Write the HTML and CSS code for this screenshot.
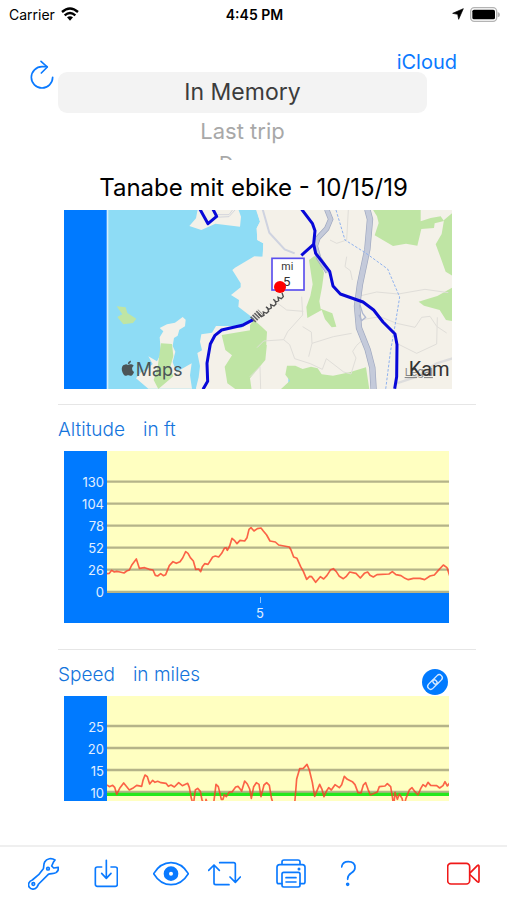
FILE: index.html
```
<!DOCTYPE html>
<html lang="en">
<head>
    <meta charset="UTF-8">
    <meta name="viewport" content="width=device-width, initial-scale=1.0">
    <title>Tanabe mit ebike - 10/15/19</title>
    <link rel="stylesheet" href="styles.css">
</head>
<body>
    <div class="status-bar">
        <div class="status-left">
            <span>Carrier</span>
            <svg width="18" height="14" viewBox="0 0 54 42" fill="none" stroke="#000" stroke-width="7" aria-hidden="true">
                <path d="M3 15Q27-6 51 15"/>
                <path d="M11 25Q27 11 43 25"/>
                <path d="M27 41l-9-10q9-7 18 0z" fill="#000" stroke="none"/>
            </svg>
        </div>
        <div class="status-time">4:45 PM</div>
        <div class="status-right">
            <svg width="12" height="12" viewBox="0 0 36 36" aria-hidden="true">
                <path d="M34 2L2 16l15 3 3 15z" fill="#000" stroke="#000" stroke-width="2" stroke-linejoin="round"/>
            </svg>
            <svg width="30" height="15" viewBox="0 0 90 45" aria-hidden="true">
                <rect x="2" y="2" width="78" height="41" rx="11" fill="#fff" stroke="#b4b4b4" stroke-width="4"/>
                <rect x="7" y="8" width="68" height="29" rx="5" fill="#000"/>
                <path d="M83 15q7 2 7 8t-7 8z" fill="#b4b4b4"/>
            </svg>
        </div>
    </div>

    <header>
        <button class="refresh" type="button" aria-label="Reload">
            <svg width="26" height="30" viewBox="87 179 78 90" fill="none" stroke="#0a7aff" stroke-width="5" stroke-linecap="round" stroke-linejoin="round">
                <path d="M158 231a32 32 0 1 1-32-32h15"/>
                <path d="M123 183l19 17-18 18"/>
            </svg>
        </button>
        <a class="icloud" href="#icloud">iCloud</a>
        <div class="picker" role="listbox" aria-label="Trip">
            <div class="option selected" role="option" aria-selected="true">In Memory</div>
            <div class="option" role="option" aria-selected="false">Last trip</div>
            <div class="option far" role="option" aria-selected="false">Days</div>
        </div>
    </header>

    <main>
        <h1>Tanabe mit ebike - 10/15/19</h1>

        <div class="map">
            <svg viewBox="0 0 1164 537" preserveAspectRatio="xMinYMid slice" role="img" aria-label="Map of the trip">
                <rect width="1164" height="537" fill="#8edcf5"/>
                <!-- west side: bay, islands and peninsula -->
                <g transform="translate(-27 -30)">
                    <path d="M428 28l-5 27-20 23 36 12 42-19 74 9 3-30-8-22z" fill="#f4f1e9"/>
                    <path d="M480 44h42l12-16M478 52l44-2 18-20" fill="none" stroke="#d3d5dc" stroke-width="3"/>
                    <path d="M185 319l27 3 5 17 27 17-10 13-29 4-18-22 15-8z" fill="#bfe5a4"/>
                    <path d="M314 384l22-11 24-5 23-17 9 8-2 20-17 10-5 18-11 7-4 24 8 17-8 31 11 30 46-26-5 36 6 40H280l-37-31 15-18 14-5 21-20-13-23 26 15 12-24-4-48 11-18z" fill="#f4f1e9"/>
                    <path d="M318 430l33 2 4 36-10 36 10 25-45 38-14-27 12-40z" fill="#bfe5a4"/>
                    <path d="M700 20H600l15 45-10 20 2 35 18 10-2 40-25-1-58 34-8 7 25 40v12l-29 23 24 15-2 20 48 37-40 28-30-7-45 0-12 20-32 5-4 22 6 26-14 8 8 39-4 34-8 32 4 20H700z" fill="#f4f1e9"/>
                    <path d="M500 405l90-15 30-40 22 40-5 30-6 60-46 55 5 35h-45l-28-20-8-50 22-34-20-16z" fill="#bfe5a4"/>
                </g>
                <!-- east side: land, woods and roads -->
                <g transform="translate(558 -30)">
                    <path d="M20 28l10 37-10 20 2 35 18 10-2 40-15 2-23 100 18 100 30 60 100 140h480V28z" fill="#f4f1e9"/>
                    <path d="M368 28h144v36l30-10 30-5 10 14-28 7-2 14-38 3-12 50-34-6-39 7-55-32 12-37-5-20z" fill="#bfe5a4"/>
                    <path d="M612 35l-30 25-7 42-18 31 15 40 15 42 25 15zM612 260l-50 28-30 9-26 8 16 12 47 13 19 30 24 4z" fill="#bfe5a4"/>
                    <path d="M177 180l16-12 15 14 14 36-6 44-8 42 4 22 35 14 12 40-14 2-20-24-10-28-43 24-3-33 12-33 7-35-7-46z" fill="#bfe5a4"/>
                    <path d="M0 375l12-15 23 20 16 15-2 35-17 48-32 30z" fill="#bfe5a4"/>
                    <path d="M92 568l28-26-14-18 5-27 25 0 22 10 25-7 20 5 12 18 34 4 50-10 49-15 10 66z" fill="#bfe5a4"/>
                    <g fill="none" stroke="#e0ded9" stroke-width="3">
                        <path d="M70 300l40 30 50 4M155 290l3 55-45 50-12 24-60 4-20 20M101 419l18 15 15 42 47 15 36 17 12-32 52 40 22 6 15-48-10-20 12-18 22-20M158 380l26 16 2 34-10 40M186 430l64-20 55-10M320 290l60-14 65 6 80-14 70 10M330 360l60-10 50 20 55 12 20-30 25-3 20 30 30 20M440 430l60 30 60-28 2-80M290 170l-5 30 16 12 6 28M240 120l20 10 30-10 5-90M0 530l30-30 2 68"/>
                        <path d="M440 550l60-20 60-40 50-16" stroke="#ddd" stroke-width="7"/>
                    </g>
                    <path d="M38 28l20 70 46 50 30 12" fill="none" stroke="#cfd3e0" stroke-width="6"/>
                    <path d="M230 28l12 30-12 28-26 28-8 24 10 36 28 42" fill="none" stroke="#9fa8c0" stroke-width="16"/>
                    <path d="M230 28l12 30-12 28-26 28-8 24 10 36 28 42" fill="none" stroke="#c4cada" stroke-width="12"/>
                    <path d="M352 28l8 30-8 90-22 104-9 66 6 66 26 65 14 54 4 68" fill="none" stroke="#9fa8c0" stroke-width="19"/>
                    <path d="M352 28l8 30-8 90-22 104-9 66 6 66 26 65 14 54 4 68" fill="none" stroke="#c4cada" stroke-width="15"/>
                    <path d="M330 315l8 25 9 12-12 10-8-18" fill="none" stroke="#aeb7d0" stroke-width="4"/>
                    <path d="M258 30l27 90 62 39 66 48 36 84-14 86-14 80-14 111" fill="none" stroke="#8fb2ef" stroke-width="3" stroke-dasharray="8 5"/>
                </g>
                <!-- recorded track -->
                <g fill="none" stroke="#0808d8" stroke-width="9" stroke-linejoin="round">
                    <path d="M408-2l24 43 26-22-11-21"/>
                    <path d="M417 538l14-24-2-54 10-58 14-26 20-16 62-14 34-18"/>
                    <path d="M713-2l32 42 8 22-4 40 6 28 42 54 10 44 22 24 68 24 32 24 28 36 36 36 6 32-1 96-6 36"/>
                    <path d="M748 104l-36 32"/>
                </g>
                <path d="M566 330l24-24" stroke="#666" stroke-width="22" stroke-dasharray="5 3"/>
                <path d="M584 312l8 8 8-4-2-10 10 4 6-6-4-12M606 290l8 8 8-4-2-10 10 4 6-6-4-12M628 268l8 8 8-4-2-10 10 4 6-6-4-12" fill="none" stroke="#4d4d4d" stroke-width="4"/>
                <rect x="624" y="145" width="96" height="95" fill="#fff" stroke="#5b50ee" stroke-width="5"/>
                <text class="pin-text" x="670" y="181">mi</text>
                <text class="pin-text pin-number" x="668" y="229">5</text>
                <circle cx="648" cy="231" r="18" fill="#f00"/>
                <!-- attribution -->
                <path transform="translate(169 452) scale(1.9)" fill="#4b5557" d="M12.152 6.896c-.948 0-2.415-1.078-3.96-1.04-2.04.027-3.91 1.183-4.961 3.014-2.117 3.675-.546 9.103 1.519 12.09 1.013 1.454 2.208 3.09 3.792 3.039 1.52-.065 2.09-.987 3.935-.987 1.831 0 2.35.987 3.96.948 1.637-.026 2.676-1.48 3.676-2.948 1.156-1.688 1.636-3.325 1.662-3.415-.039-.013-3.182-1.221-3.22-4.857-.026-3.04 2.48-4.494 2.597-4.559-1.429-2.09-3.623-2.324-4.39-2.376-2-.156-3.675 1.09-4.61 1.09zM15.53 3.83c.843-1.012 1.4-2.427 1.245-3.83-1.207.052-2.662.805-3.532 1.818-.78.896-1.454 2.338-1.273 3.714 1.338.104 2.715-.688 3.559-1.701z"/>
                <text class="maps-text" x="215" y="498">Maps</text>
                <text class="legal-text" x="1022" y="498">Legal</text>
                <text class="place-text" x="1034" y="498">Kam</text>
                <rect width="129" height="537" fill="#007aff"/>
                <rect x="128" width="5" height="537" fill="#d4effc"/>
            </svg>
        </div>

        <section>
            <h2><span>Altitude</span><span>in ft</span></h2>
            <div class="chart altitude">
                <div class="y-axis">
                    <span>130</span>
                    <span>104</span>
                    <span>78</span>
                    <span>52</span>
                    <span>26</span>
                    <span>0</span>
                </div>
                <svg class="plot" viewBox="0 0 1026 426" preserveAspectRatio="none" role="img" aria-label="Altitude in feet">
                    <path class="grid" d="M0 92h1026M0 158h1026M0 224h1026M0 290h1026M0 356h1026M0 423h1026"/>
                    <polyline class="line" transform="translate(-171 -153)" points="171,521 178,520 185,511 193,516 200,514 210,516 222,519 230,513 238,510 246,494 259,477 268,505 284,503 298,508 309,510 316,526 323,528 332,521 340,527 347,524 358,497 369,485 379,490 390,485 398,474 407,455 414,460 421,473 430,483 437,508 446,507 452,515 457,500 464,491 474,493 488,471 496,468 506,471 515,460 523,445 528,443 532,451 539,438 546,415 553,421 561,431 570,421 584,423 591,413 597,388 603,383 612,393 622,386 633,384 640,393 650,405 660,423 676,426 686,435 702,438 718,441 723,450 731,471 741,475 752,500 760,514 770,538 779,529 785,530 797,547 811,530 821,537 831,526 842,509 850,506 859,515 868,529 880,536 888,530 899,516 918,520 931,534 943,520 953,516 960,526 970,531 981,524 1017,522 1027,515 1038,524 1053,527 1065,535 1075,539 1090,535 1110,535 1124,539 1140,528 1153,525 1165,511 1180,495 1191,503 1200,530"/>
                </svg>
                <div class="x-axis"><div class="tick">5</div></div>
            </div>
        </section>

        <section>
            <h2><span>Speed</span><span>in miles</span></h2>
            <button class="link-button" type="button" aria-label="Link charts">
                <svg width="26" height="26" viewBox="0 0 78 78" fill="none" stroke="#d5e9ff" stroke-width="4">
                    <g transform="rotate(-45 39 39)">
                        <rect x="12" y="30" width="32" height="18" rx="9"/>
                        <rect x="34" y="30" width="32" height="18" rx="9"/>
                    </g>
                </svg>
            </button>
            <div class="chart speed">
                <div class="y-axis">
                    <span>25</span>
                    <span>20</span>
                    <span>15</span>
                    <span>10</span>
                </div>
                <svg class="plot" viewBox="0 0 1026 315" preserveAspectRatio="none" role="img" aria-label="Speed in miles">
                    <path class="grid" d="M0 90h1026M0 156h1026M0 222h1026M0 288h1026"/>
                    <path class="average" d="M0 295h1026"/>
                    <polyline class="line" transform="translate(-171 -168)" points="171,435 178,440 188,436 194,442 200,463 209,445 221,429 229,439 238,450 248,445 260,436 275,439 279,421 285,405 292,410 299,432 308,421 315,427 323,424 333,428 348,430 355,439 363,435 373,441 386,428 397,437 413,430 418,442 424,475 430,495 436,450 443,445 451,454 456,480 466,498 468,478 475,498 490,498 498,433 505,440 514,478 519,478 523,464 529,470 538,456 546,456 557,441 564,439 575,453 584,423 592,432 599,447 604,475 611,440 619,428 627,433 633,470 642,435 650,428 658,436 664,473 672,500 732,500 735,480 740,417 749,386 760,385 771,373 778,390 787,427 794,469 801,452 809,433 816,448 822,470 830,452 836,443 844,450 855,434 868,443 875,434 883,409 892,418 907,425 915,434 924,458 933,459 940,435 947,428 954,448 961,465 982,456 988,440 1005,438 1012,431 1022,440 1027,470 1031,500 1035,457 1042,478 1048,462 1056,475 1062,498 1068,475 1078,450 1086,443 1095,455 1104,465 1112,446 1119,434 1127,440 1134,427 1142,436 1160,437 1169,444 1179,437 1185,425 1192,438 1200,428"/>
                </svg>
            </div>
        </section>
    </main>

    <nav class="toolbar" aria-label="Tools">
        <button type="button" aria-label="Settings">
            <svg width="31" height="33" viewBox="84 50 93 99">
                <path d="M165 59c-10-7-25-5-31 6-4 7-2 16-4 20l-14 18-19 16c-11 4-14 14-9 22 6 8 18 7 23-1l5-9 29-29c8-4 15 0 23-5 6-4 8-10 7-16l-14 2-6-6 5-11z"/>
                <circle cx="144" cy="85" r="4"/>
                <circle cx="100" cy="131" r="4"/>
            </svg>
        </button>
        <button type="button" aria-label="Import">
            <svg width="24" height="33" viewBox="282 50 72 99">
                <path d="M305 80h-13q-6 0-6 6v46q0 6 6 6h54q6 0 6-6V86q0-6-6-6h-13"/>
                <path d="M319 60v54M305 99l14 15 14-15"/>
            </svg>
        </button>
        <button type="button" aria-label="View">
            <svg width="36" height="33" viewBox="459 50 108 99">
                <path d="M461 100Q481 67 513 67T565 100Q545 133 513 133T461 100z"/>
                <circle cx="513" cy="100" r="14" stroke-width="16"/>
            </svg>
        </button>
        <button class="repeat" type="button" aria-label="Repeat">
            <svg width="33" height="33" viewBox="621 50 99 99">
                <path d="M656 67h42q5 0 5 5v53M687 110l16 16 15-16M684 133h-40q-5 0-5-5V75M623 90l16-16 16 16"/>
            </svg>
        </button>
        <button type="button" aria-label="Print">
            <svg width="30" height="33" viewBox="76 50 90 99">
                <path d="M94 73v-8q0-6 6-6h42q6 0 6 6v8M94 130h-9q-6 0-6-6V81q0-8 8-8h68q8 0 8 8v43q0 6-6 6h-9"/>
                <rect x="94" y="96" width="54" height="44" rx="5"/>
                <path d="M106 112h30M106 125h30"/>
                <circle cx="145" cy="86" r="2"/>
            </svg>
        </button>
        <button type="button" aria-label="Help">
            <svg width="15" height="33" viewBox="271 50 45 99">
                <path d="M273 80q2-16 20-16 20 0 20 18 0 9-11 16t-11 17v2"/>
                <circle cx="291" cy="132" r="3"/>
            </svg>
        </button>
        <button class="record" type="button" aria-label="Record">
            <svg width="33" height="33" viewBox="594 50 99 99">
                <rect x="596" y="69" width="66" height="62" rx="10"/>
                <path d="M664 97l21-21q5-4 5 2v44q0 6-5 2l-21-20"/>
            </svg>
        </button>
    </nav>
</body>
</html>
```
FILE: styles.css
```
* {
    box-sizing: border-box;
}

body {
    margin: 0;
    min-height: 100vh;
    display: flex;
    flex-direction: column;
    background-color: #fff;
    color: #000;
    font-family: Inter, "Liberation Sans", sans-serif;
}

button {
    padding: 0;
    border: 0;
    background: none;
    cursor: pointer;
}

svg {
    display: block;
}

/* Status bar */
.status-bar {
    display: grid;
    grid-template-columns: 1fr auto 1fr;
    align-items: center;
    height: 28px;
    padding: 0 7px 0 9px;
    font-size: 14px;
}

.status-left,
.status-right {
    display: flex;
    align-items: center;
    gap: 6px;
}

.status-right {
    justify-content: flex-end;
}

.status-time {
    font-weight: 600;
}

/* Trip picker */
header {
    display: grid;
    grid-template-columns: 58px 1fr 80px;
    grid-template-rows: 44px 88px;
}

.refresh {
    grid-column: 1;
    grid-row: 1 / 3;
    align-self: start;
    margin-top: 32px;
    padding-left: 29px;
}

.icloud {
    grid-column: 2 / 4;
    grid-row: 1;
    justify-self: end;
    padding: 20px 50px 0 0;
    line-height: 28px;
    font-size: 20px;
    color: #0a7aff;
    text-decoration: none;
}

.picker {
    grid-column: 2;
    grid-row: 2;
    overflow: hidden;
    text-align: center;
}

.option {
    font-size: 22px;
    line-height: 36px;
    color: #a8a8a8;
}

.option.selected {
    border-radius: 9px;
    background-color: #f3f3f3;
    font-size: 23px;
    line-height: 41px;
    color: #3c3c3c;
}

.option.far {
    font-size: 20px;
    line-height: 30px;
}

/* Trip content */
main {
    flex: 1;
    padding: 0 31px 44px 58px;
}

h1 {
    margin: 0;
    padding: 6px 33px 0 6px;
    font-size: 24px;
    font-weight: 400;
    line-height: 44px;
    text-align: center;
    white-space: nowrap;
}

.map {
    margin: 0 24px 15px 6px;
}

.map svg {
    width: 100%;
    height: 179px;
}

.pin-text {
    font-family: Roboto, sans-serif;
    font-size: 32px;
    text-anchor: middle;
    fill: #333;
}

.pin-number {
    font-size: 40px;
}

.maps-text {
    font-size: 54px;
    fill: #4b5557;
}

.legal-text {
    font-size: 33px;
    text-decoration: underline;
    fill: #888;
}

.place-text {
    font-family: Roboto, sans-serif;
    font-size: 60px;
    fill: #333;
}

section {
    position: relative;
    border-top: 1px solid #e6e6e6;
}

h2 {
    display: flex;
    gap: 18px;
    margin: 0;
    padding-top: 4px;
    font-size: 19px;
    font-weight: 300;
    line-height: 42px;
    color: #1474dc;
}

.link-button {
    position: absolute;
    top: 19px;
    right: 28px;
    border-radius: 50%;
    background-color: #007aff;
}

/* Charts */
.chart {
    display: grid;
    grid-template-columns: 43px 1fr;
    margin: 0 27px 0 6px;
    background-color: #ffffc1;
}

.altitude {
    grid-template-rows: 142px 30px;
    margin-bottom: 26px;
}

.speed {
    grid-template-rows: 105px;
}

.y-axis {
    grid-row: 1 / -1;
    display: flex;
    flex-direction: column;
    padding: 20px 3px 0 0;
    background-color: #007aff;
    font-size: 13px;
    line-height: 22px;
    text-align: right;
    color: #e0efff;
}

.plot {
    width: 100%;
    height: 100%;
}

.grid {
    fill: none;
    stroke: #b5b489;
    stroke-width: 7;
}

.average {
    stroke: #24e81c;
    stroke-width: 10;
}

.line {
    fill: none;
    stroke: #fa3c28;
    stroke-opacity: 0.8;
    stroke-width: 5;
    stroke-linejoin: round;
}

.x-axis {
    background-color: #007aff;
}

.tick {
    width: 12px;
    margin-left: 43%;
    font-size: 13px;
    line-height: 16px;
    text-align: center;
    color: #e0efff;
}

.tick::before {
    content: "";
    display: block;
    width: 1px;
    height: 6px;
    margin: 4px auto 2px;
    background-color: #8cc3ff;
}

/* Toolbar */
.toolbar {
    display: flex;
    gap: 35px;
    padding: 10px 27px 10px 28px;
    border-top: 2px solid #efefef;
}

.toolbar svg {
    fill: none;
    stroke: #0a7aff;
    stroke-width: 5;
    stroke-linecap: round;
    stroke-linejoin: round;
}

.toolbar .repeat {
    margin-left: -16px;
}

.toolbar .record {
    margin-left: auto;
}

.toolbar .record svg {
    stroke: #f01818;
}
```
